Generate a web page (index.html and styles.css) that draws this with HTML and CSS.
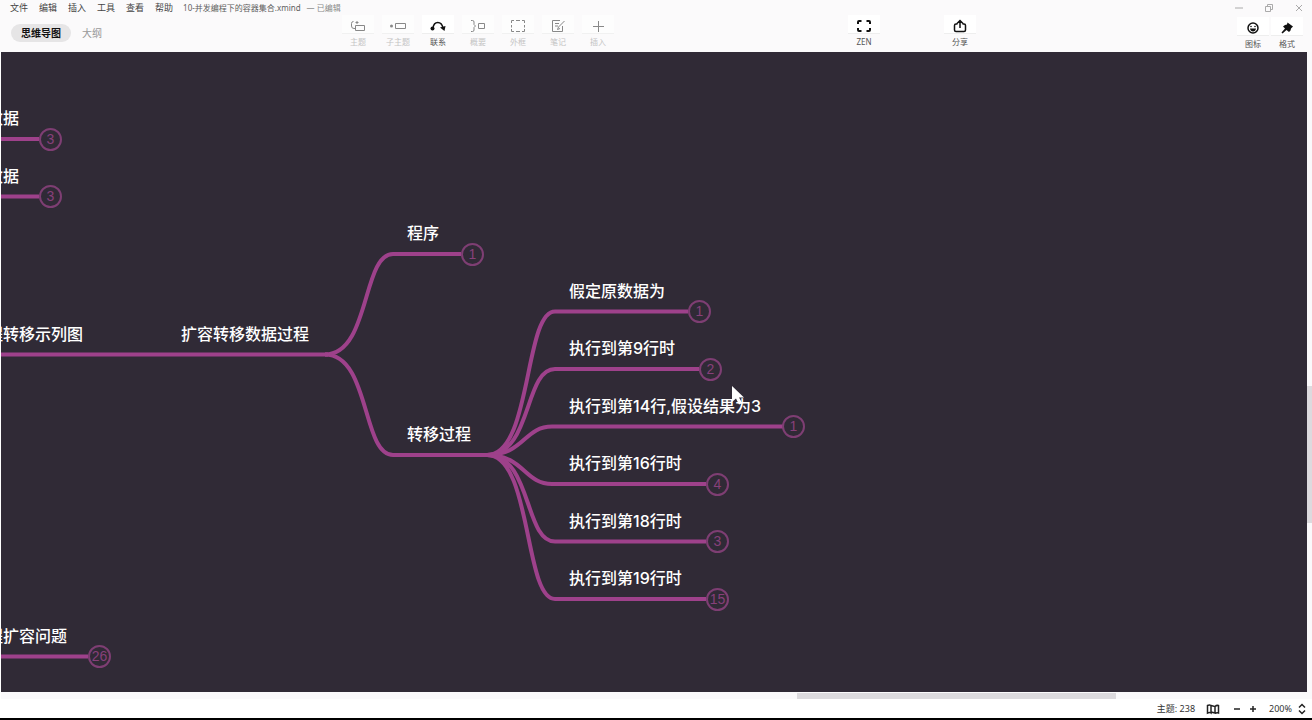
FILE: index.html
```html
<!DOCTYPE html>
<html lang="zh-CN">
<head>
<meta charset="utf-8">
<title>10-并发编程下的容器集合.xmind</title>
<link rel="stylesheet" href="styles.css">
</head>
<body>
<header class="header">
  <div class="titlebar">
    <nav class="menu">
      <button>文件</button><button>编辑</button><button>插入</button><button>工具</button><button>查看</button><button>帮助</button>
    </nav>
    <span class="filename">10-并发编程下的容器集合.xmind</span>
    <span class="edited">— 已编辑</span>
    <div class="window-controls">
      <button aria-label="最小化"><svg width="10" height="10"><path d="M1 5h8"/></svg></button>
      <button aria-label="还原"><svg width="10" height="10"><path d="M1.5 3.500h5v5h-5zM3.500 3V1.500h5v5H7"/></svg></button>
      <button aria-label="关闭"><svg width="10" height="10"><path d="M2 2l6 6M8 2l-6 6"/></svg></button>
    </div>
  </div>
  <div class="toolbar">
    <div class="tabs">
      <button class="tab active">思维导图</button>
      <button class="tab">大纲</button>
    </div>
    <div class="tools">
      <button class="tool off"><span class="icon"><svg width="16" height="16"><path d="M3.500 3.500Q1.500 3.500 1.500 5.500V8Q1.500 10.500 4 10.500H5M5.500 7.500h9v5h-9zM5.500 4.500h3M7 3v3"/></svg></span>主题</button>
      <button class="tool off"><span class="icon"><svg width="18" height="16"><path d="M6.500 5.500h10v5h-10z"/><circle class="fill" cx="2.500" cy="8" r="1.500"/></svg></span>子主题</button>
      <button class="tool"><span class="icon"><svg width="16" height="16"><path class="line" d="M3 10C4 2.500 11.500 2.500 13 10"/><circle class="fill" cx="2.500" cy="10.500" r="2"/><path class="fill" d="M10 9.500l5.500-1.500-1 5z"/></svg></span>联系</button>
      <button class="tool off"><span class="icon"><svg width="16" height="16"><path d="M1 2.500h1.500Q4 2.500 4 4v2.500L5.500 8 4 9.500V12q0 1.500-1.500 1.500H1M8.500 5.500h6v5h-6z"/></svg></span>概要</button>
      <button class="tool off"><span class="icon"><svg width="16" height="16"><path d="M1.500 5V2.500H4M6 2.500h4M12 2.500h2.500V5M14.500 7v2.500M14.500 11v2.500H12M10 13.500H6M4 13.500H1.500V11M1.500 9.500V7"/></svg></span>外框</button>
      <button class="tool off"><span class="icon"><svg width="16" height="16"><path d="M10 2.500H2.500v11h10V8M5 5.500h4M5 8h3M14.500 3L8.500 9l-1 2.500L10 10.500"/></svg></span>笔记</button>
      <button class="tool off"><span class="icon"><svg width="16" height="16"><path d="M8.500 3v11M3 8.500h11"/></svg></span>插入</button>
    </div>
    <div class="actions">
      <button class="tool"><span class="icon"><svg width="16" height="16"><path class="bold" d="M2 6V4q0-1 1-1h2.500M10.500 3H13q1 0 1 1v2M14 10v2q0 1-1 1h-2.500M5.500 13H3q-1 0-1-1v-2"/></svg></span>ZEN</button>
      <button class="tool"><span class="icon"><svg width="16" height="16"><path class="line" d="M5.500 6H4Q2.500 6 2.500 7.500V12q0 1.500 1.500 1.500h8q1.500 0 1.500-1.500V7.500Q13.500 6 12 6h-1.500M8 10V3M5 5.500L8 2.500l3 3"/></svg></span>分享</button>
    </div>
    <div class="panels">
      <button class="tool"><span class="icon"><svg width="16" height="16"><circle class="line" cx="8" cy="8" r="5"/><path class="fill" d="M5 8.500h6q-.5 3-3 3t-3-3z"/><circle class="fill" cx="6" cy="6.500" r=".8"/><circle class="fill" cx="10" cy="6.500" r=".8"/></svg></span>图标</button>
      <button class="tool"><span class="icon"><svg width="16" height="16"><path class="fill" d="M8.500 2.500l5.500 4-2 2-.5 2-1.500 1.500-2.500-2-4 3.500-1-1 3.500-4-2-2L6 5l2-.5z"/></svg></span>格式</button>
    </div>
  </div>
</header>

<main class="workspace">
  <section class="canvas">
    <svg class="branches" width="1306" height="640" aria-hidden="true">
      <g transform="translate(-1 -52)">
        <path d="M0 139H39M0 196.500H39M0 656.500H88M0 354.500H328"/>
        <path d="M325 354.500C370 354.500 362 254 393 254H461"/>
        <path d="M325 354.500C370 354.500 362 455 393 455H490"/>
        <path d="M487 455C532 455 524 311.500 555 311.500H688"/>
        <path d="M487 455C532 455 524 369 555 369H699"/>
        <path d="M487 455C524 455 524 426.500 552 426.500H783"/>
        <path d="M487 455C524 455 524 484 552 484H706"/>
        <path d="M487 455C532 455 524 541.500 555 541.500H706"/>
        <path d="M487 455C532 455 524 599 555 599H706"/>
      </g>
    </svg>
    <span class="topic t1">数据</span><button class="badge b1">3</button>
    <span class="topic t2">数据</span><button class="badge b2">3</button>
    <span class="topic t3">程转移示列图</span>
    <span class="topic t4">扩容转移数据过程</span>
    <span class="topic t5">程序</span><button class="badge b5">1</button>
    <span class="topic t6">转移过程</span>
    <span class="topic t7">假定原数据为</span><button class="badge b7">1</button>
    <span class="topic t8">执行到第9行时</span><button class="badge b8">2</button>
    <span class="topic t9">执行到第14行,假设结果为3</span><button class="badge b9">1</button>
    <span class="topic t10">执行到第16行时</span><button class="badge b10">4</button>
    <span class="topic t11">执行到第18行时</span><button class="badge b11">3</button>
    <span class="topic t12">执行到第19行时</span><button class="badge b12">15</button>
    <span class="topic t13">程扩容问题</span><button class="badge b13">26</button>
    <svg class="pointer" width="18" height="22" aria-hidden="true"><path d="M2 1v16l4-3.500 3 6 3-1.500-3-5.500h5z"/></svg>
  </section>
  <div class="vscroll"><div class="vthumb"></div></div>
  <div class="hscroll"><div class="hthumb"></div></div>
</main>

<footer class="status">
  <span class="count">主题: 238</span>
  <button class="map" aria-label="缩略图"><svg width="14" height="12"><path d="M1.500 2.500v7.500q2-1 3.500 0V2.500q-1.500-1-3.500 0zM5 2.500l4 1v6.500l-4-1M9 3.500q1.500-1.500 3.500-1v7.500q-2-.5-3.500.5"/></svg></button>
  <button class="step" aria-label="缩小"><svg width="8" height="8"><path d="M1 4h6"/></svg></button>
  <button class="step" aria-label="放大"><svg width="8" height="8"><path d="M1 4h6M4 1v6"/></svg></button>
  <button class="zoom">200%<svg width="8" height="12"><path d="M1 4.500L4 1.500l3 3M1 7.500l3 3 3-3"/></svg></button>
</footer>
</body>
</html>
```
FILE: styles.css
```css
* { box-sizing: border-box; }

body {
  margin: 0;
  height: 100vh;
  display: flex;
  flex-direction: column;
  background: #fff;
  font-family: "Noto Sans", "Noto Sans CJK SC", sans-serif;
  overflow: hidden;
}

button {
  margin: 0;
  padding: 0;
  border: 0;
  background: none;
  font: inherit;
  color: inherit;
  white-space: nowrap;
}

svg { display: block; fill: none; stroke: currentColor; }

/* Header */
.header { background: #fbfafb; flex: none; }

.titlebar {
  display: flex;
  align-items: center;
  height: 15px;
  padding: 0 8px 0 10px;
  font-size: 8px;
  line-height: 14px;
  color: #606060;
}

.menu { display: flex; gap: 11px; margin-right: 10px; font-size: 9px; color: #444; }
.edited { margin-left: 6px; color: #8a8a8a; }
.window-controls { display: flex; gap: 20px; margin-left: auto; color: #aaa; }

.toolbar { display: flex; height: 37px; }

.tabs { display: flex; align-items: center; gap: 11px; width: 342px; padding: 0 0 2px 11px; font-size: 10px; }
.tab { height: 18px; line-height: 18px; color: #999; }
.tab.active { padding: 0 10px; border-radius: 9px; background: #e6e5e6; color: #111; font-weight: 700; }

.tools { display: flex; gap: 8px; }
.actions { display: flex; gap: 64px; margin-left: 234px; }
.panels { display: flex; gap: 2px; margin-left: auto; padding: 2px 9px 0 0; }

.tool {
  display: flex;
  flex-direction: column;
  align-items: center;
  gap: 2px;
  width: 32px;
  font-size: 8px;
  line-height: 12px;
  color: #555;
}

.icon {
  display: grid;
  place-items: center;
  width: 32px;
  height: 19px;
  padding-top: 3px;
  border-bottom: 1px solid #eee;
  background: #fff;
  color: #111;
}

.icon .bold { stroke-width: 2; }
.icon .line { stroke-width: 1.5; }
.icon .fill { fill: currentColor; stroke: none; }
.off { color: #c4c4c4; }
.off .icon { color: #888; background: #fdfdfd; border-color: #f1f1f1; }

/* Mind map */
.workspace {
  flex: 1;
  min-height: 0;
  display: grid;
  grid-template-columns: 1fr 5px;
  grid-template-rows: 1fr 7px;
  padding-left: 1px;
}

.canvas { position: relative; overflow: hidden; background: #302a36; }
.branches { color: #9e418b; stroke-width: 4; }

.topic {
  position: absolute;
  font-family: Inter, "Noto Sans CJK SC", sans-serif;
  font-size: 16px;
  font-weight: 500;
  line-height: 20px;
  color: #fff;
  white-space: nowrap;
}

.badge {
  position: absolute;
  width: 23px;
  height: 23px;
  border: 2px solid #7e3e73;
  border-radius: 50%;
  background: #302a36;
  color: #87407a;
  font-family: "Liberation Sans", Arial, sans-serif;
  font-size: 14px;
  line-height: 19px;
  text-align: center;
}

.t1 { left: -14px; top: 56px; }
.t2 { left: -14px; top: 114px; }
.t3 { left: -14px; top: 272px; }
.t4 { left: 180px; top: 272px; }
.t5 { left: 406px; top: 171px; }
.t6 { left: 406px; top: 372px; }
.t7 { left: 568px; top: 229px; }
.t8 { left: 568px; top: 286px; }
.t9 { left: 568px; top: 344px; }
.t10 { left: 568px; top: 401px; }
.t11 { left: 568px; top: 459px; }
.t12 { left: 568px; top: 516px; }
.t13 { left: -14px; top: 574px; }

.b1 { left: 38px; top: 76px; }
.b2 { left: 38px; top: 133px; }
.b5 { left: 460px; top: 191px; }
.b7 { left: 687px; top: 248px; }
.b8 { left: 698px; top: 306px; }
.b9 { left: 781px; top: 363px; }
.b10 { left: 705px; top: 421px; }
.b11 { left: 705px; top: 478px; }
.b12 { left: 705px; top: 536px; }
.b13 { left: 87px; top: 593px; }

.pointer { position: absolute; left: 729px; top: 333px; fill: #fff; stroke: none; }

.vscroll { background: #faf9fb; padding-top: 334px; }
.vthumb { height: 137px; background: #dcdade; }
.hscroll { grid-column: 1 / -1; padding: 1px 196px 0 796px; background: #faf9fb; }
.hthumb { height: 6px; background: #dcdade; }

/* Status bar */
.status {
  flex: none;
  display: flex;
  align-items: center;
  justify-content: flex-end;
  height: 21px;
  padding-right: 6px;
  border-bottom: 2px solid #000;
  font-size: 9px;
  line-height: 14px;
  color: #333;
}

.status svg { stroke-width: 1.5; color: #222; }
.map { margin: 0 13px 0 11px; }
.step { margin-right: 8px; }
.zoom { display: flex; align-items: center; gap: 6px; margin-left: 4px; }
```
